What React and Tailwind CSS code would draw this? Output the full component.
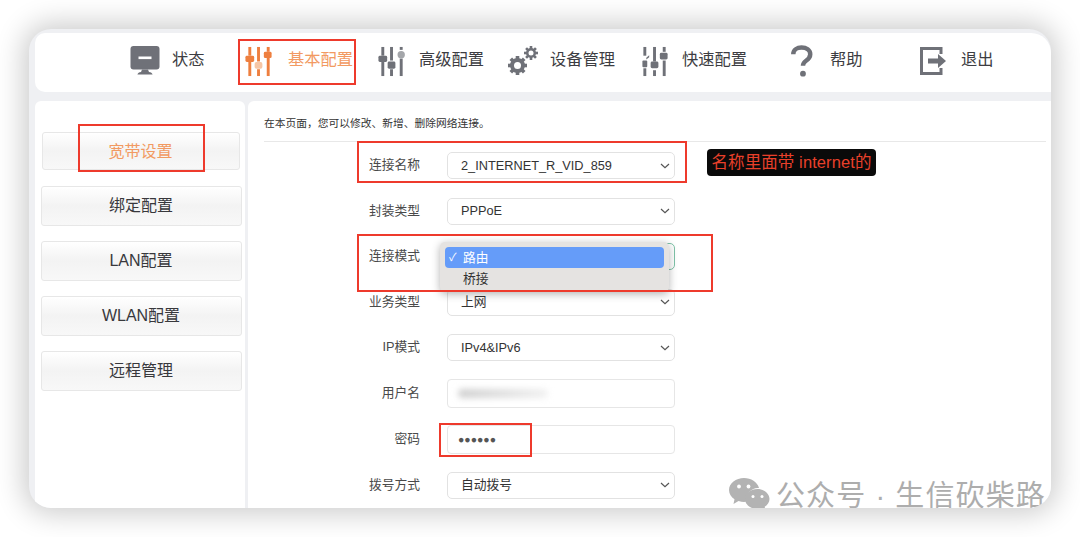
const FONT = "font-['Liberation_Sans','Noto_Sans_CJK_SC',sans-serif]";

function Monitor() {
  return (
    <svg width="30" height="30" viewBox="0 0 30 30">
      <rect x="0.5" y="0" width="29" height="23.5" rx="3" fill="#6f7178" />
      <rect x="8.5" y="10.5" width="13" height="2.6" fill="#fff" />
      <path d="M12 23.5h6l1 2.6c2 .4 3 1 3.6 2.4H7.4c.6-1.4 1.6-2 3.6-2.4z" fill="#6f7178" />
    </svg>
  );
}

function SlidersActive() {
  return (
    <svg width="28" height="31" viewBox="0 0 28 32">
      <g fill="#ee7f3f">
        <rect x="3" y="1" width="3" height="9" />
        <rect x="3" y="16" width="3" height="15" />
        <rect x="0" y="10" width="9" height="6.5" rx="1.5" />
        <rect x="12" y="1" width="3" height="15" />
        <rect x="12" y="24" width="3" height="7" />
        <rect x="22" y="1" width="3" height="5" />
        <rect x="22" y="12" width="3" height="19" />
        <rect x="19" y="6" width="8" height="6.5" rx="1.5" />
      </g>
      <rect x="9.5" y="16.5" width="8" height="7" rx="2" fill="#f6c6a5" />
    </svg>
  );
}

function SlidersAdvanced() {
  return (
    <svg width="28" height="31" viewBox="0 0 28 32">
      <g fill="#6f7178">
        <rect x="3" y="1" width="3" height="9" />
        <rect x="3" y="16" width="3" height="15" />
        <rect x="0" y="10" width="9" height="6.5" rx="1.5" />
        <rect x="12" y="1" width="3" height="14" />
        <rect x="12" y="24" width="3" height="7" />
        <rect x="9.5" y="16" width="8" height="7.5" rx="1.5" />
        <rect x="22" y="1" width="3" height="3" />
        <rect x="22" y="13" width="3" height="18" />
      </g>
      <circle cx="23.5" cy="9" r="3.8" fill="#a4a6aa" />
    </svg>
  );
}

function SlidersQuick() {
  return (
    <svg width="28" height="31" viewBox="0 0 28 32">
      <g fill="#6f7178">
        <rect x="2" y="1" width="3" height="9" />
        <path d="M5 12 8 9.5v2L5 14z" />
        <rect x="1" y="15" width="5" height="7" rx="1" />
        <rect x="2" y="23" width="3" height="8" />
        <rect x="12" y="1" width="3" height="15" />
        <rect x="9.5" y="16" width="8" height="7" rx="1.5" />
        <rect x="12" y="25" width="3" height="6" />
        <rect x="22" y="1" width="3" height="5" />
        <rect x="19" y="7" width="8" height="7" rx="1.5" />
        <rect x="22" y="15" width="3" height="16" />
      </g>
    </svg>
  );
}

function Gear({ cx, cy, r, hole, sw }) {
  const teeth = [0, 45, 90, 135];
  return (
    <g>
      {teeth.map((a) => (
        <rect
          key={a}
          x={cx - sw / 2}
          y={cy - r - 2}
          width={sw}
          height={2 * r + 4}
          fill="#6f7178"
          transform={`rotate(${a} ${cx} ${cy})`}
        />
      ))}
      <circle cx={cx} cy={cy} r={r} fill="#6f7178" />
      <circle cx={cx} cy={cy} r={hole} fill="#fff" />
    </g>
  );
}

function Gears() {
  return (
    <svg width="32" height="32" viewBox="0 0 32 32">
      <Gear cx={10.5} cy={20.5} r={7.5} hole={3.5} sw={3.6} />
      <Gear cx={24} cy={8} r={5} hole={2.5} sw={2.6} />
    </svg>
  );
}

function Question() {
  return (
    <svg width="24" height="33" viewBox="0 0 24 34">
      <path
        d="M3 9.500C3 5 7 2.600 11.500 2.600c5 0 9 2.700 9 7 0 3.400-2 5-4.300 6.600-2 1.400-3.200 2.500-3.200 5.300"
        fill="none"
        stroke="#6f7178"
        strokeWidth="4.600"
      />
      <circle cx="13" cy="29.500" r="3" fill="#6f7178" />
    </svg>
  );
}

function Logout() {
  return (
    <svg width="27" height="28" viewBox="0 0 27 28">
      <path d="M21 7V1.500H1.500v25H21V21" fill="none" stroke="#6f7178" strokeWidth="3" />
      <path d="M8 11.500h10V7l8 7-8 7v-4.500H8z" fill="#6f7178" />
    </svg>
  );
}

function WeChat() {
  return (
    <svg width="41" height="33" viewBox="0 0 41 33">
      <path d="M15 0C7 0 0 5 0 12c0 4 2.200 7 5.500 9.300L4.500 26l5-3c2 .6 3.800.9 5.500.9 1 0 2-.1 3-.3C16 15 24 9 30 10 28.500 4 22 0 15 0z" fill="#b3b3b3" />
      <circle cx="10" cy="8.500" r="1.900" fill="#fff" />
      <circle cx="19.500" cy="8.500" r="1.900" fill="#fff" />
      <path d="M28.500 11C21.500 11 16 15.500 16 21s5.500 10 12.500 10c1.500 0 3-.3 4.500-.7l3.500 2.500-.8-4c3-2 4.800-4.700 4.800-7.800 0-5.500-5.500-10-12-10z" fill="#b3b3b3" />
      <circle cx="24" cy="18.500" r="1.500" fill="#fff" />
      <circle cx="33" cy="18.500" r="1.500" fill="#fff" />
    </svg>
  );
}

function Chevron() {
  return (
    <svg width="10" height="6" viewBox="0 0 10 6" className="absolute right-[4px] top-1/2 -translate-y-1/2">
      <path d="M1 1l4 3.600L9 1" fill="none" stroke="#555" strokeWidth="1.200" />
    </svg>
  );
}

const navItems = [
  { icon: <Monitor />, label: "状态", iconW: "w-[30px]", text: "ml-[12px]", next: "w-[115px]" },
  { icon: <SlidersActive />, label: "基本配置", active: true, iconW: "w-[28px]", text: "ml-[15px]", next: "w-[133px]" },
  { icon: <SlidersAdvanced />, label: "高级配置", iconW: "w-[28px]", text: "ml-[13px]", next: "w-[129px]" },
  { icon: <Gears />, label: "设备管理", iconW: "w-[32px]", text: "ml-[11px]", next: "w-[134px]" },
  { icon: <SlidersQuick />, label: "快速配置", iconW: "w-[28px]", text: "ml-[13px]", next: "w-[149px]" },
  { icon: <Question />, label: "帮助", iconW: "w-[24px]", text: "ml-[16px]", next: "w-[130px]" },
  { icon: <Logout />, label: "退出", iconW: "w-[27px]", text: "ml-[14px]", next: "w-[80px]" },
];

function NavItem({ item }) {
  return (
    <div className={`flex items-center shrink-0 ${item.next}`}>
      <div className={`flex justify-center ${item.iconW}`}>{item.icon}</div>
      <span className={`${item.text} pb-[3px] text-[16.250px] leading-none whitespace-nowrap ${item.active ? "text-[#f29a62]" : "text-[#3d3d42]"}`}>
        {item.label}
      </span>
    </div>
  );
}

const sideItems = ["宽带设置", "绑定配置", "LAN配置", "WLAN配置", "远程管理"];

function SideButton({ label, active }) {
  return (
    <div
      className={`flex items-center justify-center rounded-[3px] border-[1.500px] border-[#e7e7e7] bg-gradient-to-b from-white via-[#f3f3f3] to-[#f8f8f8] text-[16px] ${active ? "ml-[1px] mb-[1.500px] h-[38px] w-[198px] pt-[2px] text-[#f29a62]" : "h-[40px] w-[201px] text-[#38383c]"}`}
    >
      {label}
    </div>
  );
}

function Field({ label, children, className = "" }) {
  return (
    <div className={`flex items-center ${className}`}>
      <div className="w-[156px] text-right text-[12.750px] text-[#4a4a4a] leading-none">{label}</div>
      <div className="relative ml-[27px] w-[228px]">{children}</div>
    </div>
  );
}

function SelectBox({ value }) {
  return (
    <div className="relative flex h-[27px] w-full items-center rounded-[5px] border border-[#e2e2e2] bg-white pl-[13px] text-[12.750px] text-[#333]">
      {value}
      <Chevron />
    </div>
  );
}

function InputBox({ children }) {
  return (
    <div className="flex h-[29px] w-full items-center rounded-[4px] border border-[#e6e6e6] bg-white pl-[10px] text-[#555]">
      {children}
    </div>
  );
}

export default function App() {
  return (
    <div className={`h-[537px] w-[1080px] overflow-hidden bg-white pl-[29px] pt-[29px] ${FONT}`}>
      <div className="relative h-[479px] w-[1022px] overflow-hidden rounded-[22px] bg-[#eff0f3] pl-[6px] pt-[4px] shadow-[0_0_28px_6px_rgba(0,0,0,0.2)]">
        <header className="flex h-[59px] w-[1016px] items-center rounded-l-[10px] rounded-tr-[20px] bg-white pb-[3px] pl-[95px]">
          {navItems.map((item) => (
            <NavItem key={item.label} item={item} />
          ))}
        </header>

        <div className="mt-[9px] flex h-[407px] gap-[3px]">
          <aside className="flex w-[210px] shrink-0 flex-col items-start gap-[14.800px] rounded-t-[6px] bg-white pl-[5.500px] pt-[31px]">
            {sideItems.map((label, i) => (
              <SideButton key={label} label={label} active={i === 0} />
            ))}
          </aside>

          <main className="w-[803px] rounded-tl-[6px] bg-white pl-[16px] pt-[15px]">
            <p className="mt-[0.500px] whitespace-nowrap text-[10.750px] leading-[12px] text-[#333]">在本页面，您可以修改、新增、删除网络连接。</p>
            <div className="mr-[5px] mt-[12.500px] h-px bg-[#e8e8e8]" />
            <div className="mt-[10px] flex flex-col">
              <Field label="连接名称"><SelectBox value="2_INTERNET_R_VID_859" /></Field>
              <Field label="封装类型" className="mt-[18.500px]"><SelectBox value="PPPoE" /></Field>
              <Field label="连接模式" className="mt-[18.500px]">
                <div className="h-[27px] w-full rounded-[5px] border border-[#7fc3a8] bg-white" />
              </Field>
              <Field label="业务类型" className="mt-[18.500px]"><SelectBox value="上网" /></Field>
              <Field label="IP模式" className="mt-[18.500px]"><SelectBox value="IPv4&IPv6" /></Field>
              <Field label="用户名" className="mt-[18px]">
                <InputBox>
                  <div className="h-[9px] w-[90px] rounded-full bg-gradient-to-r from-[#cfcfcf] to-[#f1f1f1] blur-[3px]" />
                </InputBox>
              </Field>
              <Field label="密码" className="mt-[17px]">
                <InputBox><span className="text-[10.500px] leading-none">●●●●●●</span></InputBox>
              </Field>
              <Field label="拨号方式" className="mt-[17.500px]"><SelectBox value="自动拨号" /></Field>
            </div>
          </main>
        </div>

        {/* Native select popup */}
        <div className="absolute left-[411px] top-[213px] h-[50px] w-[229px] rounded-[5px] bg-[#e5e3e1] p-[5px] text-[12.750px] text-[#333] shadow-[0_2px_8px_rgba(0,0,0,0.3)]">
          <div className="flex h-[21px] items-center rounded-[4px] bg-[#659cf9] pl-[4px] text-white">
            <span className="w-[14px] text-[11px]">✓</span>路由
          </div>
          <div className="flex h-[21px] items-center pl-[18px]">桥接</div>
        </div>

        {/* Red annotations */}
        <div className="absolute left-[209px] top-[10px] h-[46px] w-[118px] border-[2.500px] border-[#ee3a2c]" />
        <div className="absolute left-[49px] top-[95px] h-[48px] w-[127px] border-[2.500px] border-[#ee3a2c]" />
        <div className="absolute left-[328px] top-[112px] h-[42px] w-[330px] border-[2.500px] border-[#ee3a2c]" />
        <div className="absolute left-[328px] top-[205px] h-[58px] w-[356px] border-[2.500px] border-[#ee3a2c]" />
        <div className="absolute left-[410px] top-[394px] h-[34px] w-[93px] border-[2.500px] border-[#ee3a2c]" />
        <div className="absolute left-[678px] top-[120px] flex h-[27px] w-[169px] items-center justify-center whitespace-nowrap rounded-[4px] bg-[#0a0a0a] text-[16.500px] leading-none tracking-[0.100px] text-[#e8402a]">
          名称里面带 internet的
        </div>

        {/* Watermark */}
        <div className="absolute left-[700px] top-[448px] flex items-center">
          <WeChat />
          <span className="ml-[6px] mt-[5px] whitespace-nowrap text-[29px] leading-none tracking-[1.100px] text-[#adadad]">公众号 · 生信砍柴路</span>
        </div>
      </div>
    </div>
  );
}
